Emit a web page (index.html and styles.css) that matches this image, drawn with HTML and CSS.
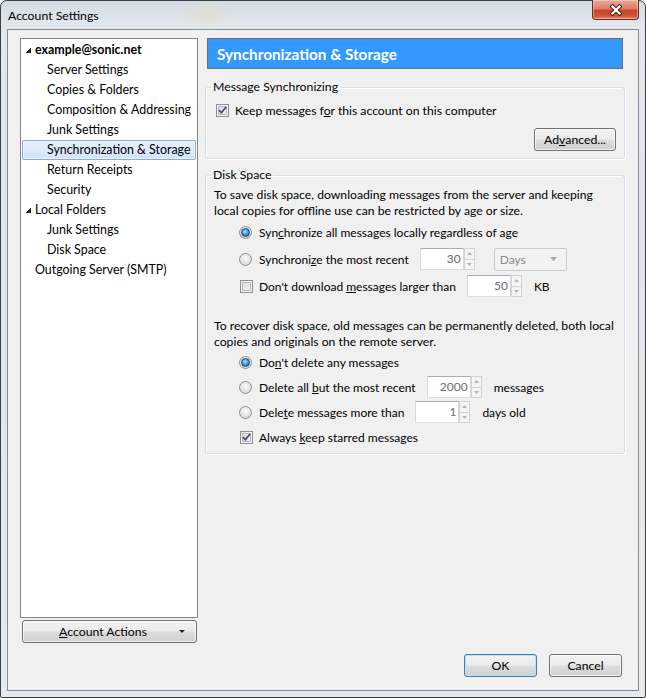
FILE: index.html
```html
<!DOCTYPE html>
<html>
<head>
<meta charset="utf-8">
<title>Account Settings</title>
<link rel="stylesheet" href="styles.css">
</head>
<body>
<div class="window">
  <div class="titlebar">
    <span class="title">Account Settings</span>
    <div class="close">
      <svg width="14" height="12" viewBox="0 0 14 12"><path d="M3.5 2.5 L10.5 9.5 M10.5 2.5 L3.5 9.5" stroke="#4a1f16" stroke-width="4.2" stroke-linecap="square"/><path d="M3.5 2.5 L10.5 9.5 M10.5 2.5 L3.5 9.5" stroke="#ffffff" stroke-width="2.2" stroke-linecap="square"/></svg>
    </div>
  </div>
  <div class="client">
    <div class="main">
      <div class="sidebar">
        <div class="tree">
          <div class="row l0 bold"><span class="twisty"></span><span>example@sonic.net</span></div>
          <div class="row l1">Server Settings</div>
          <div class="row l1">Copies &amp; Folders</div>
          <div class="row l1">Composition &amp; Addressing</div>
          <div class="row l1">Junk Settings</div>
          <div class="row l1 selected">Synchronization &amp; Storage</div>
          <div class="row l1">Return Receipts</div>
          <div class="row l1">Security</div>
          <div class="row l0"><span class="twisty"></span><span>Local Folders</span></div>
          <div class="row l1">Junk Settings</div>
          <div class="row l1">Disk Space</div>
          <div class="row l0 leaf">Outgoing Server (SMTP)</div>
        </div>
        <button class="btn actions"><span class="lbl"><u>A</u>ccount Actions</span><span class="drop"></span></button>
      </div>
      <div class="content">
        <div class="header">Synchronization &amp; Storage</div>
        <fieldset class="group g1">
          <legend>Message Synchronizing</legend>
          <div class="opt keep"><span class="cb"><svg width="11" height="11" viewBox="0 0 11 11"><path d="M2 5.2 L4.4 7.8 L9 2" stroke="#3a4a72" stroke-width="1.7" fill="none"/></svg></span><span class="t">Keep messages f<u>o</u>r this account on this computer</span></div>
          <div class="btnrow"><button class="btn adv">Ad<u>v</u>anced...</button></div>
        </fieldset>
        <fieldset class="group g2">
          <legend>Disk Space</legend>
          <p class="para">To save disk space, downloading messages from the server and keeping local copies for offline use can be restricted by age or size.</p>
          <div class="opts first">
            <div class="opt"><span class="rb on"></span><span class="t">Syn<u>c</u>hronize all messages locally regardless of age</span></div>
            <div class="opt"><span class="rb"></span><span class="t">Synchroni<u>z</u>e the most recent</span>
              <span class="spin"><span class="val">30</span><span class="arr"><span><svg width="5" height="3" viewBox="0 0 5 3"><path d="M0 3 L2.5 0 L5 3Z" fill="#b4b4b4"/></svg></span><span><svg width="5" height="3" viewBox="0 0 5 3"><path d="M0 0 L2.5 3 L5 0Z" fill="#b4b4b4"/></svg></span></span></span>
              <span class="select"><span class="sel-text">Days</span><svg width="7" height="4" viewBox="0 0 7 4"><path d="M0 0 L3.5 4 L7 0Z" fill="#a8a8a8"/></svg></span>
            </div>
            <div class="opt"><span class="cb off"></span><span class="t">Don't download <u>m</u>essages larger than</span>
              <span class="spin"><span class="val">50</span><span class="arr"><span><svg width="5" height="3" viewBox="0 0 5 3"><path d="M0 3 L2.5 0 L5 3Z" fill="#b4b4b4"/></svg></span><span><svg width="5" height="3" viewBox="0 0 5 3"><path d="M0 0 L2.5 3 L5 0Z" fill="#b4b4b4"/></svg></span></span></span>
              <span class="unit">KB</span>
            </div>
          </div>
          <p class="para second">To recover disk space, old messages can be permanently deleted, both local copies and originals on the remote server.</p>
          <div class="opts second">
            <div class="opt"><span class="rb on"></span><span class="t">Do<u>n</u>'t delete any messages</span></div>
            <div class="opt"><span class="rb"></span><span class="t">Delete all <u>b</u>ut the most recent</span>
              <span class="spin"><span class="val">2000</span><span class="arr"><span><svg width="5" height="3" viewBox="0 0 5 3"><path d="M0 3 L2.5 0 L5 3Z" fill="#b4b4b4"/></svg></span><span><svg width="5" height="3" viewBox="0 0 5 3"><path d="M0 0 L2.5 3 L5 0Z" fill="#b4b4b4"/></svg></span></span></span>
              <span class="unit">messages</span>
            </div>
            <div class="opt"><span class="rb"></span><span class="t">Dele<u>t</u>e messages more than</span>
              <span class="spin"><span class="val">1</span><span class="arr"><span><svg width="5" height="3" viewBox="0 0 5 3"><path d="M0 3 L2.5 0 L5 3Z" fill="#b4b4b4"/></svg></span><span><svg width="5" height="3" viewBox="0 0 5 3"><path d="M0 0 L2.5 3 L5 0Z" fill="#b4b4b4"/></svg></span></span></span>
              <span class="unit">days old</span>
            </div>
            <div class="opt"><span class="cb"><svg width="11" height="11" viewBox="0 0 11 11"><path d="M2 5.2 L4.4 7.8 L9 2" stroke="#3a4a72" stroke-width="1.7" fill="none"/></svg></span><span class="t">Always <u>k</u>eep starred messages</span></div>
          </div>
        </fieldset>
      </div>
    </div>
    <div class="footer">
      <button class="btn default ok">OK</button>
      <button class="btn cancel">Cancel</button>
    </div>
  </div>
</div>
</body>
</html>
```
FILE: styles.css
```css
* { box-sizing: border-box; }
html, body { margin: 0; padding: 0; }
body {
  width: 646px;
  height: 698px;
  overflow: hidden;
  font-family: Lato, "Segoe UI", "Noto Sans", sans-serif;
  font-size: 12px;
  color: #000;
  background: #f3f4f6;
}
.window {
  width: 646px;
  height: 698px;
  border: 1px solid #3a3f46;
  border-radius: 7px 7px 2px 2px;
  background:
    radial-gradient(ellipse 26px 14px at 205px 14px, rgba(240, 215, 160, 0.4), transparent),
    linear-gradient(180deg, #d3dce5 0px, #e2e8ee 28px, #dfe5eb 200px, #e6eaee 698px);
  padding: 0 6px 6px 6px;
  display: flex;
  flex-direction: column;
}
.titlebar {
  height: 28px;
  display: flex;
  align-items: flex-start;
  flex: none;
}
.title {
  padding: 7px 0 0 1px;
  line-height: 15px;
  font-size: 12.25px;
  color: #000;
}
.close {
  margin-left: auto;
  margin-top: -1px;
  width: 47px;
  height: 20px;
  border: 1px solid #6b2a1c;
  border-top: none;
  border-radius: 0 0 4px 4px;
  background: linear-gradient(180deg, #e9a99b 0%, #dd7d68 45%, #c9452b 55%, #d2573b 85%, #e38a6d 100%);
  box-shadow: inset 0 0 0 1px rgba(255, 255, 255, 0.35);
  display: flex;
  align-items: center;
  justify-content: center;
}
.client {
  flex: 1;
  border: 1px solid #868c94;
  background: #f0f0f0;
  padding: 8px 13px 13px 12px;
  display: flex;
  flex-direction: column;
  min-height: 0;
}
.main {
  flex: 1;
  display: flex;
  gap: 7px;
  min-height: 0;
}
.sidebar {
  width: 178px;
  flex: none;
  display: flex;
  flex-direction: column;
}
.tree {
  flex: 1;
  border: 1px solid #828790;
  background: #fff;
  font-size: 12.4px;
  padding-top: 1px;
}
.row {
  height: 20px;
  line-height: 20px;
  display: flex;
  align-items: center;
  white-space: nowrap;
}
.row.bold { font-weight: bold; }
.row.l0 { padding-left: 5px; }
.row.l0.leaf { padding-left: 14px; }
.row.l1 { padding-left: 26px; }
.twisty {
  width: 5px;
  height: 5px;
  margin-right: 4px;
  margin-top: 1px;
  background: linear-gradient(135deg, transparent 50%, #262626 50%);
}
.row.selected {
  margin: 0 1px;
  padding-left: 24px;
  border: 1px solid #84acdd;
  border-radius: 2px;
  background: linear-gradient(180deg, #e4effc 0%, #d2e4fb 100%);
  box-shadow: inset 0 0 0 1px rgba(255, 255, 255, 0.5);
}
.btn {
  font: inherit;
  font-size: 12.25px;
  color: #000;
  border: 1px solid #707070;
  border-radius: 3px;
  background: linear-gradient(180deg, #f2f2f2 0%, #ebebeb 48%, #dddddd 52%, #cfcfcf 100%);
  box-shadow: inset 0 0 0 1px rgba(255, 255, 255, 0.7);
  padding: 0;
  height: 23px;
  display: flex;
  align-items: center;
  justify-content: center;
}
.actions {
  margin: 2px 1px 0 2px;
  flex: none;
}
.actions .lbl {
  flex: 1;
  text-align: center;
  padding-left: 4px;
}
.actions .drop {
  width: 0;
  height: 0;
  border-left: 3px solid transparent;
  border-right: 3px solid transparent;
  border-top: 3px solid #222;
  margin-right: 11px;
}
.content {
  flex: 1;
  min-width: 0;
  display: flex;
  flex-direction: column;
}
.header {
  margin: 0 2px;
  height: 31px;
  flex: none;
  background: #3399ff;
  border: 1px solid #6e6e6e;
  color: #fff;
  font-weight: bold;
  font-size: 15.3px;
  padding-left: 9px;
  display: flex;
  align-items: center;
}
.group {
  margin: 0;
  min-width: 0;
  border: 1px solid #d5dfe5;
  border-radius: 3px;
  box-shadow: inset 1px 1px 0 #fff, 1px 1px 0 #fff;
  padding: 0 8px 0 8px;
}
.group legend {
  padding: 0 2px;
  margin-left: -3px;
  line-height: 16px;
  font-size: 12.25px;
}
.g1 {
  margin-top: 10px;
  padding-top: 6px;
  padding-bottom: 7px;
}
.g2 {
  margin-top: 8px;
  padding-top: 4px;
  padding-bottom: 5px;
}
.opt {
  display: flex;
  align-items: center;
  height: 22px;
  white-space: nowrap;
}
.opt.keep {
  height: 18px;
  padding-left: 2px;
  font-size: 12.2px;
}
.btnrow {
  display: flex;
  justify-content: flex-end;
  margin-top: 9px;
}
.adv { width: 82px; }
.para {
  margin: 0;
  line-height: 16px;
  font-size: 12.2px;
}
.para.second { margin-top: 21px; }
.opts {
  display: flex;
  flex-direction: column;
  padding-left: 25px;
}
.opts.first { margin-top: 2px; gap: 5px; }
.opts.second { margin-top: 1px; gap: 3px; }
.cb {
  width: 13px;
  height: 13px;
  flex: none;
  border: 1px solid #8e8f8f;
  background: linear-gradient(135deg, #d6d9dd 0%, #f8f8f8 100%);
  box-shadow: inset 0 0 0 1px #f6f6f6, inset 0 0 0 2px #b4b8bd;
  margin-right: 6px;
  display: flex;
}
.opts .cb { margin-left: 1px; }
.rb {
  width: 13px;
  height: 13px;
  flex: none;
  border-radius: 50%;
  border: 1px solid #8e8f8f;
  background: radial-gradient(circle at 50% 40%, #fcfcfc 0%, #e8e8e8 45%, #c9c9c9 100%);
  margin-right: 7px;
  display: flex;
  align-items: center;
  justify-content: center;
}
.rb.on::after {
  content: "";
  width: 7px;
  height: 7px;
  border-radius: 50%;
  border: 1px solid #1c4f7e;
  background: radial-gradient(circle at 45% 40%, #c3ecfd 0%, #3c9edc 45%, #14558f 100%);
}
.spin {
  display: flex;
  height: 22px;
  margin-left: 11px;
}
.spin .val {
  width: 44px;
  border: 1px solid #b5b8bd;
  border-color: #a9acb2 #d5d8dd #dcdfe4 #d5d8dd;
  background: #fff;
  color: #6d6d6d;
  text-align: right;
  padding-right: 2px;
  line-height: 20px;
}
.spin .arr {
  width: 11px;
  display: flex;
  flex-direction: column;
}
.spin .arr span {
  flex: 1;
  border: 1px solid #d2d4d7;
  background: #f4f4f4;
  display: flex;
  align-items: center;
  justify-content: center;
}
.spin .arr span + span { border-top: none; }
.select {
  margin-left: 19px;
  width: 73px;
  height: 23px;
  border: 1px solid #c9cbcf;
  border-radius: 2px;
  background: #f2f2f2;
  color: #8a8a8a;
  display: flex;
  align-items: center;
  padding: 0 9px 0 5px;
  justify-content: space-between;
}
.unit { margin-left: 12px; }
.footer {
  display: flex;
  justify-content: flex-end;
  gap: 12px;
  margin-top: 11px;
  padding-right: 3px;
  flex: none;
}
.footer .btn { width: 73px; }
.btn.default {
  border-color: #3c7fb1;
  box-shadow: inset 0 0 0 1px #b8e1f6;
}
```
